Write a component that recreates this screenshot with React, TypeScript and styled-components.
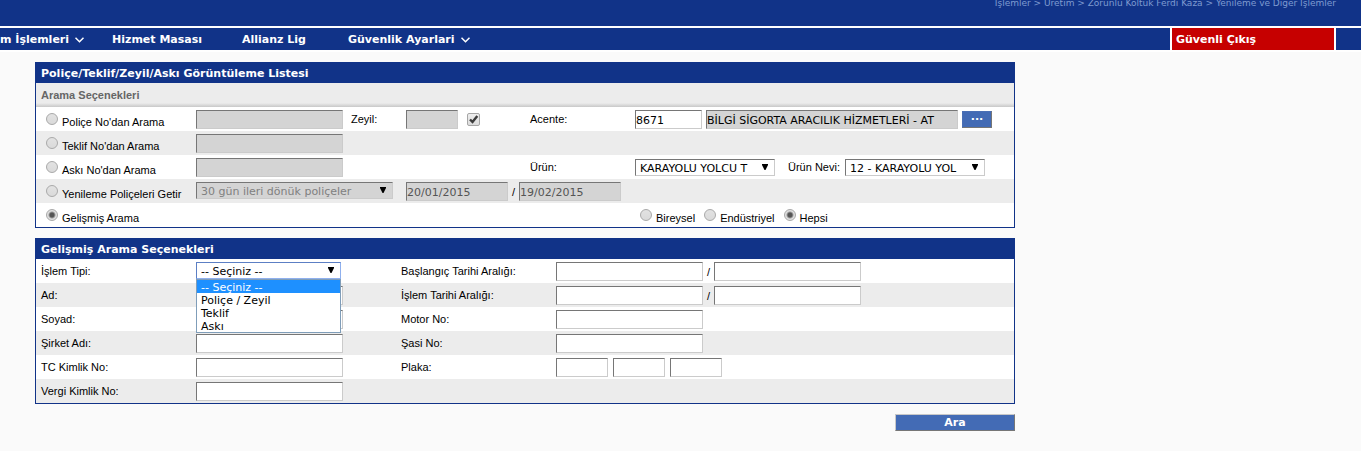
import React, { useState } from "react";
import styled, { createGlobalStyle, css } from "styled-components";

const navy = "#113388";
const sans = '"Liberation Sans", Arial, sans-serif';
const wide = '"DejaVu Sans", Verdana, sans-serif';

const GlobalStyle = createGlobalStyle`
  * { box-sizing: border-box; }
  body {
    margin: 0;
    background: #fafafa;
    color: #000;
    font: 11px ${sans};
    overflow-x: hidden;
  }
`;

const Header = styled.header`
  height: 26px;
  padding-right: 25px;
  background: ${navy};
`;

const Breadcrumb = styled.div`
  color: #7f9bd0;
  font: 9px/6px ${wide};
  text-align: right;
  white-space: nowrap;
`;

const NavBar = styled.nav`
  display: flex;
  height: 26px;
  border-top: 2px solid #fff;
  border-bottom: 2px solid #fff;
  background: ${navy};
  font: bold 11px/24px ${wide};
`;

const NavItem = styled.a<{ $width: number }>`
  display: flex;
  align-items: center;
  gap: 6px;
  width: ${(p) => p.$width}px;
  height: 24px;
  color: #fff;
  text-decoration: none;
  white-space: nowrap;
`;

const LogoutLink = styled.a`
  width: 166px;
  margin-left: auto;
  margin-right: 25px;
  padding-left: 4px;
  border: solid #fff;
  border-width: 0 2px;
  background: #c60000;
  color: #fff;
  text-decoration: none;
`;

const Main = styled.main`
  display: flex;
  flex-direction: column;
  gap: 10px;
  max-width: 1015px;
  padding: 10px 0 20px 35px;
`;

const Panel = styled.section`
  border: 1px solid ${navy};
  background: #fff;
`;

const PanelTitle = styled.h2`
  height: 20px;
  margin: 0;
  padding-left: 5px;
  background: ${navy};
  color: #fff;
  font: bold 11px/22px ${wide};
`;

const PanelSubtitle = styled.h3`
  height: 24px;
  margin: 0;
  padding-left: 5px;
  background: linear-gradient(#ececec 20px, #c8c8c8 24px);
  color: #666;
  font: bold 11px/24px ${sans};
`;

const Row = styled.div<{ $shaded?: boolean; $columns: string }>`
  display: grid;
  grid-template-columns: ${(p) => p.$columns};
  align-items: start;
  height: 24px;
  padding: 3px 0 0 5px;
  background: ${(p) => (p.$shaded ? "#ececec" : "#fff")};
`;

const Group = styled.div<{ $gap?: number; $span?: number; $column?: number }>`
  display: flex;
  align-items: center;
  gap: ${(p) => p.$gap ?? 4}px;
  grid-column: ${(p) => p.$column ?? "auto"} / span ${(p) => p.$span ?? 1};
`;

const FieldLabel = styled.label<{ $column?: number }>`
  grid-column: ${(p) => p.$column ?? "auto"};
  line-height: 18px;
  white-space: nowrap;
`;

const NeviLabel = styled(FieldLabel)`
  width: 53px;
  margin-left: 9px;
`;

const sunken = css`
  border: 1px solid;
  border-color: #767676 #cbcbcb #cbcbcb #767676;
  border-radius: 0;
  outline: none;
`;

const TextBox = styled.input<{ $width?: number }>`
  ${sunken}
  width: ${(p) => p.$width ?? 147}px;
  height: 19px;
  padding: 1px 0 0;
  background: #fff;
  color: #000;
  font: 11px ${wide};
  &:disabled { background: #d4d4d4; color: #555; }
  &:read-only:not(:disabled) { background: #d4d4d4; }
`;

const SelectFrame = styled.div<{ $width: number }>`
  position: relative;
  width: ${(p) => p.$width}px;
  height: 17px;
`;

const SelectControl = styled.select<{ $focused?: boolean }>`
  ${sunken}
  appearance: none;
  display: block;
  width: 100%;
  height: 17px;
  padding: 2px 20px 0 4px;
  background: #fff;
  color: #000;
  font: 11px ${wide};
  ${(p) => p.$focused && "border-color: #5c7fc4 #8fb0ee #8fb0ee #5c7fc4;"}
  &:disabled { background: #d4d4d4; color: #808080; opacity: 1; }
`;

const SelectArrow = styled.svg`
  position: absolute;
  top: 5px;
  right: 7px;
  pointer-events: none;
`;

const OptionList = styled.ul`
  position: absolute;
  top: 17px;
  left: 0;
  z-index: 1;
  width: 100%;
  margin: 0;
  padding: 0;
  border: 1px solid #7f9db9;
  background: #fff;
  list-style: none;
  font: 11px/15px ${wide};
`;

const OptionItem = styled.li<{ $active: boolean }>`
  height: 13px;
  padding-left: 4px;
  background: ${(p) => (p.$active ? "#1e90ff" : "#fff")};
  color: ${(p) => (p.$active ? "#fff" : "#000")};
`;

const ChoiceLabel = styled.label`
  display: flex;
  align-items: flex-start;
  gap: 4px;
  padding-left: 5px;
  white-space: nowrap;
`;

const ChoiceText = styled.span`
  padding-top: 3px;
  line-height: 18px;
`;

const Radio = styled.input`
  appearance: none;
  width: 12px;
  height: 12px;
  margin: 3px 0 0;
  border: 1px solid #a9a9a9;
  border-radius: 50%;
  background: linear-gradient(#e2e2e2, #dadada);
  &:checked {
    background: radial-gradient(circle, #555 0 2px, #e0e0e0 4px);
  }
`;

const CheckFrame = styled.span`
  position: relative;
  display: flex;
`;

const CheckBox = styled.input`
  appearance: none;
  width: 13px;
  height: 13px;
  margin: 0;
  border: 1px solid #a6a6a6;
  border-radius: 2px;
  background: linear-gradient(#eee, #dcdcdc);
`;

const CheckMark = styled.svg`
  position: absolute;
  top: 0;
  left: 0;
  pointer-events: none;
`;

const ActionButton = styled.button<{ $width: number; $raised?: boolean }>`
  width: ${(p) => p.$width}px;
  height: 17px;
  padding: 1px 0 0;
  border: 1px solid;
  border-color: ${(p) => (p.$raised ? "#c8c8c8 #767676 #767676 #c8c8c8" : "#4a6fb5 #767676 #767676 #4a6fb5")};
  background: #436bb5;
  color: #fff;
  font: bold 11px/14px ${wide};
`;

const SubmitButton = styled(ActionButton)`
  align-self: flex-end;
`;

const Chevron = () => (
  <svg width="9" height="6" viewBox="0 0 9 6" fill="none" stroke="#fff" strokeWidth="1.5" aria-hidden>
    <path d="M.5 .7 4.5 4.7 8.500 .7" />
  </svg>
);

type SelectProps = {
  id: string;
  width: number;
  options: string[];
  disabled?: boolean;
  label?: string;
  open?: boolean;
};

function Select({ id, width, options, disabled, label, open }: SelectProps) {
  const [value, setValue] = useState(options[0]);
  return (
    <SelectFrame $width={width}>
      <SelectControl
        id={id}
        aria-label={label}
        disabled={disabled}
        $focused={open}
        value={value}
        onChange={(e) => setValue(e.target.value)}
      >
        {options.map((o) => (
          <option key={o}>{o}</option>
        ))}
      </SelectControl>
      <SelectArrow width="6" height="6" viewBox="0 0 6 6" aria-hidden>
        <path d="M0 0h6v1L3.500 6h-1L0 1z" fill="#000" />
      </SelectArrow>
      {open && (
        <OptionList role="listbox" aria-label="İşlem Tipi">
          {options.map((o) => (
            <OptionItem key={o} role="option" aria-selected={o === value} $active={o === value} onClick={() => setValue(o)}>
              {o}
            </OptionItem>
          ))}
        </OptionList>
      )}
    </SelectFrame>
  );
}

function Choice({ name, text, checked }: { name: string; text: string; checked?: boolean }) {
  return (
    <ChoiceLabel>
      <Radio type="radio" name={name} defaultChecked={checked} />
      <ChoiceText>{text}</ChoiceText>
    </ChoiceLabel>
  );
}

const searchColumns = "155px 155px 55px 124px 105px 1fr";
const detailColumns = "155px 205px 155px 1fr";

const DateRange = ({ id, label }: { id: string; label: string }) => (
  <>
    <FieldLabel htmlFor={id}>{label}</FieldLabel>
    <Group>
      <TextBox id={id} />
      <span>/</span>
      <TextBox aria-label={label + " bitiş"} />
    </Group>
  </>
);

export default function App() {
  return (
    <>
      <GlobalStyle />
      <Header>
        <Breadcrumb>İşlemler &gt; Üretim &gt; Zorunlu Koltuk Ferdi Kaza &gt; Yenileme ve Diğer İşlemler</Breadcrumb>
      </Header>
      <NavBar>
        <NavItem href="#islemler" $width={112}>m İşlemleri <Chevron /></NavItem>
        <NavItem href="#hizmet" $width={130}>Hizmet Masası</NavItem>
        <NavItem href="#lig" $width={106}>Allianz Lig</NavItem>
        <NavItem href="#guvenlik" $width={130}>Güvenlik Ayarlari <Chevron /></NavItem>
        <LogoutLink href="#cikis">Güvenli Çıkış</LogoutLink>
      </NavBar>
      <Main>
        <Panel>
          <PanelTitle>Poliçe/Teklif/Zeyil/Askı Görüntüleme Listesi</PanelTitle>
          <PanelSubtitle>Arama Seçenekleri</PanelSubtitle>
          <Row $columns={searchColumns}>
            <Choice name="mode" text="Poliçe No'dan Arama" />
            <TextBox disabled aria-label="Poliçe No" />
            <FieldLabel htmlFor="zeyil">Zeyil:</FieldLabel>
            <Group $gap={9}>
              <TextBox id="zeyil" $width={52} disabled />
              <CheckFrame>
                <CheckBox type="checkbox" defaultChecked aria-label="Zeyil seçimi" />
                <CheckMark width="13" height="13" viewBox="0 0 13 13" fill="none" stroke="#3c3c3c" strokeWidth="2.4" aria-hidden>
                  <path d="M3 6.500 5.500 9 10.300 3" />
                </CheckMark>
              </CheckFrame>
            </Group>
            <FieldLabel htmlFor="acente">Acente:</FieldLabel>
            <Group>
              <TextBox id="acente" $width={67} defaultValue="8671" />
              <TextBox $width={252} readOnly aria-label="Acente adı" value="BİLGİ SİGORTA ARACILIK HİZMETLERİ - AT" />
              <ActionButton type="button" $width={30} aria-label="Acente seç">···</ActionButton>
            </Group>
          </Row>
          <Row $columns={searchColumns} $shaded>
            <Choice name="mode" text="Teklif No'dan Arama" />
            <TextBox disabled aria-label="Teklif No" />
          </Row>
          <Row $columns={searchColumns}>
            <Choice name="mode" text="Askı No'dan Arama" />
            <TextBox disabled aria-label="Askı No" />
            <FieldLabel htmlFor="urun" $column={5}>Ürün:</FieldLabel>
            <Group>
              <Select id="urun" width={140} options={["KARAYOLU YOLCU T"]} />
              <NeviLabel htmlFor="nevi">Ürün Nevi:</NeviLabel>
              <Select id="nevi" width={140} options={["12 - KARAYOLU YOL"]} />
            </Group>
          </Row>
          <Row $columns={searchColumns} $shaded>
            <Choice name="mode" text="Yenileme Poliçeleri Getir" />
            <Group $span={2}>
              <Select id="donem" width={197} disabled label="Dönem" options={["30 gün ileri dönük poliçeler"]} />
            </Group>
            <Group $span={3}>
              <TextBox $width={102} disabled aria-label="Başlangıç tarihi" value="20/01/2015" />
              <span>/</span>
              <TextBox $width={102} disabled aria-label="Bitiş tarihi" value="19/02/2015" />
            </Group>
          </Row>
          <Row $columns={searchColumns}>
            <Choice name="mode" text="Gelişmiş Arama" checked />
            <Group $column={6}>
              <Choice name="kind" text="Bireysel" />
              <Choice name="kind" text="Endüstriyel" />
              <Choice name="kind" text="Hepsi" checked />
            </Group>
          </Row>
        </Panel>
        <Panel>
          <PanelTitle>Gelişmiş Arama Seçenekleri</PanelTitle>
          <Row $columns={detailColumns}>
            <FieldLabel htmlFor="tip">İşlem Tipi:</FieldLabel>
            <Select id="tip" width={145} open options={["-- Seçiniz --", "Poliçe / Zeyil", "Teklif", "Askı"]} />
            <DateRange id="baslangic" label="Başlangıç Tarihi Aralığı:" />
          </Row>
          <Row $columns={detailColumns} $shaded>
            <FieldLabel htmlFor="ad">Ad:</FieldLabel>
            <TextBox id="ad" />
            <DateRange id="islem" label="İşlem Tarihi Aralığı:" />
          </Row>
          <Row $columns={detailColumns}>
            <FieldLabel htmlFor="soyad">Soyad:</FieldLabel>
            <TextBox id="soyad" />
            <FieldLabel htmlFor="motor">Motor No:</FieldLabel>
            <TextBox id="motor" />
          </Row>
          <Row $columns={detailColumns} $shaded>
            <FieldLabel htmlFor="sirket">Şirket Adı:</FieldLabel>
            <TextBox id="sirket" />
            <FieldLabel htmlFor="sasi">Şasi No:</FieldLabel>
            <TextBox id="sasi" />
          </Row>
          <Row $columns={detailColumns}>
            <FieldLabel htmlFor="tc">TC Kimlik No:</FieldLabel>
            <TextBox id="tc" />
            <FieldLabel htmlFor="plaka">Plaka:</FieldLabel>
            <Group $gap={5}>
              <TextBox id="plaka" $width={52} />
              <TextBox $width={52} aria-label="Plaka harf" />
              <TextBox $width={52} aria-label="Plaka numara" />
            </Group>
          </Row>
          <Row $columns={detailColumns} $shaded>
            <FieldLabel htmlFor="vergi">Vergi Kimlik No:</FieldLabel>
            <TextBox id="vergi" />
          </Row>
        </Panel>
        <SubmitButton type="submit" $width={120} $raised>Ara</SubmitButton>
      </Main>
    </>
  );
}
